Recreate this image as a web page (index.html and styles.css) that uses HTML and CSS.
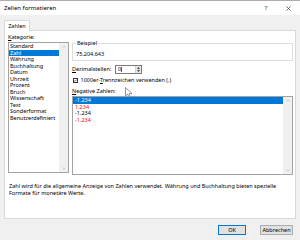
FILE: index.html
```html
<!DOCTYPE html>
<html lang="de">
<head>
  <title>Zellen formatieren</title>
  <meta charset="UTF-8">
  <link rel="stylesheet" href="styles.css">
</head>
<body>
  <div class="titlebar">
    <span class="title">Zellen formatieren</span>
    <span class="tb-btn help">?</span>
    <span class="tb-btn close">
      <svg width="5" height="5" viewBox="0 0 5 5"><path d="M0.5 0.5L4.5 4.5M4.5 0.5L0.5 4.5" stroke="#333" stroke-width="0.7"/></svg>
    </span>
  </div>
  <div class="content">
    <div class="tabs">
      <div class="tab">Zahlen</div>
    </div>
    <div class="panel">
      <div class="main">
        <!-- Kategorie -->
        <div class="cat">
          <div class="label"><u>K</u>ategorie:</div>
          <div class="listbox cat-list">
            <ul class="items">
              <li>Standard</li>
              <li class="sel">Zahl</li>
              <li>Währung</li>
              <li>Buchhaltung</li>
              <li>Datum</li>
              <li>Uhrzeit</li>
              <li>Prozent</li>
              <li>Bruch</li>
              <li>Wissenschaft</li>
              <li>Text</li>
              <li>Sonderformat</li>
              <li>Benutzerdefiniert</li>
            </ul>
            <div class="vscroll">
              <svg class="arrow" width="4" height="3" viewBox="0 0 4 3"><path d="M0.3 2.5L2 0.8L3.7 2.5" fill="none" stroke="#a6a6a6" stroke-width="0.6"/></svg>
              <svg class="arrow" width="4" height="3" viewBox="0 0 4 3"><path d="M0.3 0.5L2 2.2L3.7 0.5" fill="none" stroke="#a6a6a6" stroke-width="0.6"/></svg>
            </div>
          </div>
        </div>
        <!-- Optionen -->
        <div class="opts">
          <fieldset class="sample">
            <legend>Beispiel</legend>
            <div class="sample-value">75.204.643</div>
          </fieldset>
          <div class="decimals">
            <span class="dec-label"><u>D</u>ezimalstellen:</span>
            <div class="spin">
              <span class="spin-val">0<span class="caret"></span></span>
              <span class="spin-btns">
                <svg width="3" height="2" viewBox="0 0 3 2"><path d="M0 2L1.5 0L3 2Z" fill="#444"/></svg>
                <svg width="3" height="2" viewBox="0 0 3 2"><path d="M0 0L1.5 2L3 0Z" fill="#444"/></svg>
              </span>
            </div>
          </div>
          <div class="check">
            <span class="checkbox">
              <svg width="3" height="3" viewBox="0 0 3 3"><path d="M0.2 1.5L1.1 2.4L2.8 0.5" fill="none" stroke="#222" stroke-width="0.6"/></svg>
            </span>
            <span>1000er-<u>T</u>rennzeichen verwenden (.)</span>
          </div>
          <div class="label neg-label"><u>N</u>egative Zahlen:</div>
          <div class="listbox neg-list">
            <ul class="items">
              <li class="sel">-1.234</li>
              <li class="red">1.234</li>
              <li>-1.234</li>
              <li class="red">-1.234</li>
            </ul>
            <div class="vscroll">
              <svg class="arrow" width="4" height="3" viewBox="0 0 4 3"><path d="M0.3 2.5L2 0.8L3.7 2.5" fill="none" stroke="#a6a6a6" stroke-width="0.6"/></svg>
              <svg class="arrow" width="4" height="3" viewBox="0 0 4 3"><path d="M0.3 0.5L2 2.2L3.7 0.5" fill="none" stroke="#a6a6a6" stroke-width="0.6"/></svg>
            </div>
          </div>
        </div>
      </div>
      <p class="desc">Zahl wird für die allgemeine Anzeige von Zahlen verwendet. Währung und Buchhaltung bieten spezielle Formate für monetäre Werte.</p>
    </div>
    <div class="buttons">
      <button class="btn btn-ok">OK</button>
      <button class="btn btn-cancel">Abbrechen</button>
    </div>
  </div>
  <!-- Mauszeiger -->
  <svg class="cursor" width="8" height="11" viewBox="0 0 8 11">
    <path d="M0.5 0.5L0.5 9L2.6 7.1L4 10.3L5.4 9.7L4 6.6L7 6.6Z" fill="#fff" stroke="#555" stroke-width="0.6" stroke-linejoin="round"/>
  </svg>
</body>
</html>
```

FILE: styles.css
```css
* {
  box-sizing: border-box;
  margin: 0;
  padding: 0;
}
body {
  width: 300px;
  height: 240px;
  background: #f0f0f0;
  font-family: "Noto Sans", "Open Sans", "Liberation Sans", sans-serif;
  font-size: 5.5px;
  color: #000;
  overflow: hidden;
  position: relative;
}
/* Titelleiste */
.titlebar {
  height: 15px;
  background: #fff;
  border-top: 1px solid #acacac;
  display: flex;
  align-items: center;
  padding: 0 8px 0 4px;
}
.title {
  flex: 1;
  font-size: 6px;
}
.tb-btn {
  width: 8px;
  display: flex;
  justify-content: center;
  align-items: center;
  color: #333;
  font-size: 6px;
}
.help {
  margin-right: 14px;
}
.content {
  padding: 5px 4px 0 4px;
}
/* Reiter */
.tabs {
  display: flex;
  height: 10px;
}
.tab {
  width: 26px;
  height: 11px;
  line-height: 10px;
  text-align: center;
  background: #fff;
  border: 1px solid #d9d9d9;
  border-bottom: none;
  position: relative;
  z-index: 1;
}
.panel {
  height: 189px;
  background: #fff;
  border: 1px solid #d9d9d9;
  padding: 3px 2px 0 3px;
}
.main {
  display: flex;
  gap: 3px;
}
.label {
  height: 7px;
  line-height: 7px;
}
.cat {
  width: 61px;
}
/* Listenfelder */
.listbox {
  display: flex;
  background: #fff;
  border: 1px solid #a3a3a3;
}
.cat-list {
  margin-top: 1px;
  height: 131px;
}
.items {
  flex: 1;
  list-style: none;
}
.items li {
  height: 6.5px;
  line-height: 6.5px;
  padding-left: 1px;
  white-space: nowrap;
}
.items li.sel {
  background: #0078d7;
  color: #fff;
}
.items li.red {
  color: #ff0000;
}
.vscroll {
  width: 9px;
  background: #f0f0f0;
  display: flex;
  flex-direction: column;
  justify-content: space-between;
  align-items: center;
  padding: 2px 0;
}
.arrow {
  display: block;
}
.opts {
  flex: 1;
  padding-top: 6px;
}
.sample {
  border: 1px solid #dcdcdc;
  padding: 0 2px 2.5px 2px;
}
.sample legend {
  line-height: 7px;
  padding: 0 1px;
  margin-left: 1px;
}
.sample-value {
  padding: 3.5px 0 0 1px;
  line-height: 7px;
}
.decimals {
  display: flex;
  align-items: center;
  height: 9px;
  margin-top: 3.5px;
}
.dec-label {
  width: 43px;
}
.spin {
  width: 27px;
  height: 9px;
  display: flex;
  background: #fff;
  border: 1px solid #7a7a7a;
}
.spin-val {
  flex: 1;
  padding-left: 2px;
  line-height: 7px;
}
.caret {
  display: inline-block;
  width: 0.4px;
  height: 5px;
  margin-left: 0.3px;
  background: #555;
  vertical-align: -1px;
}
.spin-btns {
  width: 6px;
  background: #e6e6e6;
  border-left: 1px solid #cfcfcf;
  display: flex;
  flex-direction: column;
  justify-content: center;
  align-items: center;
  gap: 1px;
}
.spin-btns svg {
  display: block;
}
.check {
  display: flex;
  align-items: center;
  gap: 3px;
  height: 7px;
  margin-top: 3px;
  padding-left: 0.5px;
}
.checkbox {
  width: 5px;
  height: 5px;
  border: 1px solid #333;
  background: #fff;
  display: flex;
  justify-content: center;
  align-items: center;
}
.checkbox svg {
  display: block;
}
.neg-label {
  margin-top: 4px;
}
.neg-list {
  margin-top: 1.5px;
  height: 79px;
}
.neg-list .items li {
  padding-left: 2px;
}
.desc {
  margin-top: 8.4px;
  line-height: 6.6px;
  padding-left: 1px;
  padding-right: 4px;
}
/* Schaltflächen */
.buttons {
  display: flex;
  justify-content: flex-end;
  gap: 14px;
  margin-top: 6px;
  padding-right: 3px;
}
.btn {
  height: 10px;
  font: inherit;
  color: #000;
  background: #e1e1e1;
  border: 1px solid #adadad;
}
.btn-ok {
  width: 28px;
  border-color: #0078d7;
}
.btn-cancel {
  width: 33px;
}
.cursor {
  position: absolute;
  left: 125px;
  top: 87px;
}
```
